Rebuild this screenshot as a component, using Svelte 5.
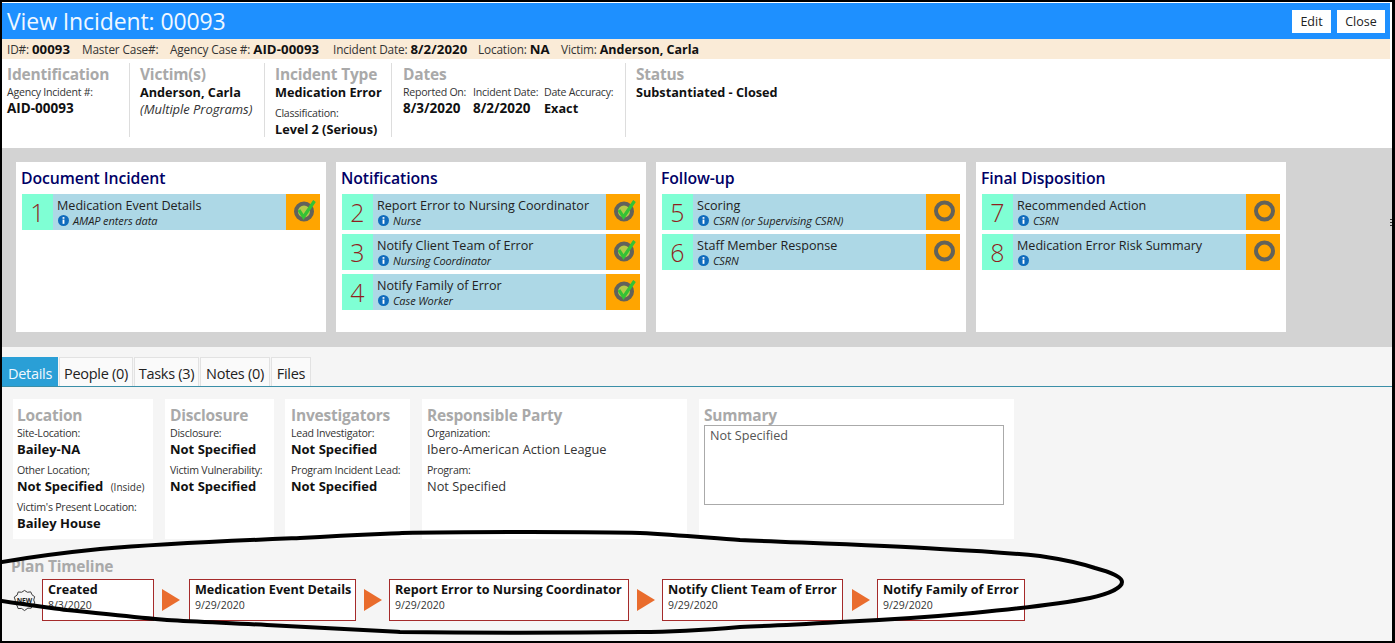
<script>
  const tasks = [
    { title: 'Document Incident', items: [{ n: 1, t: 'Medication Event Details', s: 'AMAP enters data', done: true }] },
    { title: 'Notifications', items: [
      { n: 2, t: 'Report Error to Nursing Coordinator', s: 'Nurse', done: true },
      { n: 3, t: 'Notify Client Team of Error', s: 'Nursing Coordinator', done: true },
      { n: 4, t: 'Notify Family of Error', s: 'Case Worker', done: true }] },
    { title: 'Follow-up', items: [
      { n: 5, t: 'Scoring', s: 'CSRN (or Supervising CSRN)', done: false },
      { n: 6, t: 'Staff Member Response', s: 'CSRN', done: false }] },
    { title: 'Final Disposition', items: [
      { n: 7, t: 'Recommended Action', s: 'CSRN', done: false },
      { n: 8, t: 'Medication Error Risk Summary', s: '', done: false }] }
  ];
  const tabs = ['Details', 'People (0)', 'Tasks (3)', 'Notes (0)', 'Files'];
  const timeline = [
    { t: 'Created', d: '8/3/2020', w: 112 },
    { t: 'Medication Event Details', d: '9/29/2020', w: 167 },
    { t: 'Report Error to Nursing Coordinator', d: '9/29/2020', w: 240 },
    { t: 'Notify Client Team of Error', d: '9/29/2020', w: 181 },
    { t: 'Notify Family of Error', d: '9/29/2020', w: 148 }
  ];
</script>

<div class="frame">
  <header class="top">
    <h1>View Incident: 00093</h1>
    <div class="btns"><button class="edit">Edit</button><button class="close">Close</button></div>
  </header>
  <div class="strip">
    <span class="s1">ID#: <b>00093</b></span>
    <span class="s2">Master Case#:</span>
    <span class="s3">Agency Case #: <b>AID-00093</b></span>
    <span class="s4">Incident Date: <b>8/2/2020</b></span>
    <span class="s5">Location: <b>NA</b></span>
    <span>Victim: <b class="name">Anderson, Carla</b></span>
  </div>
  <section class="summary">
    <div class="col c1">
      <h3>Identification</h3>
      <div class="lab">Agency Incident #:</div>
      <div class="val big">AID-00093</div>
    </div>
    <div class="col c2">
      <h3>Victim(s)</h3>
      <div class="val first">Anderson, Carla</div>
      <div class="em">(Multiple Programs)</div>
    </div>
    <div class="col c3">
      <h3>Incident Type</h3>
      <div class="val first">Medication Error</div>
      <div class="lab cl">Classification:</div>
      <div class="val">Level 2 (Serious)</div>
    </div>
    <div class="col c4">
      <h3>Dates</h3>
      <div class="dates">
        <div><div class="lab">Reported On:</div><div class="val big">8/3/2020</div></div>
        <div><div class="lab">Incident Date:</div><div class="val big">8/2/2020</div></div>
        <div><div class="lab">Date Accuracy:</div><div class="val">Exact</div></div>
      </div>
    </div>
    <div class="col c5">
      <h3>Status</h3>
      <div class="val first">Substantiated - Closed</div>
    </div>
  </section>

  <section class="board">
    {#each tasks as card}
      <div class="card">
        <h2>{card.title}</h2>
        {#each card.items as it}
          <div class="row">
            <div class="num">{it.n}</div>
            <div class="body">
              <div class="rt">{it.t}</div>
              <div class="rs">
                <svg class="info" viewBox="0 0 12 12" width="11" height="11">
                  <circle cx="6" cy="6" r="6" fill="#0f6cbd" />
                  <rect x="5" y="5" width="2" height="4.6" fill="#fff" />
                  <rect x="5" y="2.3" width="2" height="1.8" fill="#fff" />
                </svg>
                <i>{it.s}</i>
              </div>
            </div>
            <div class="stat">
              <svg viewBox="0 0 26 26" width="26" height="26">
                {#if it.done}
                  <circle cx="14" cy="12.500" r="8" fill="#b5c94a" stroke="#62625b" stroke-width="4" />
                  <path d="M9 11 L13.500 18 L24.500 2" fill="none" stroke="#35c235" stroke-width="3.2" />
                {:else}
                  <circle cx="14.500" cy="12" r="8.500" fill="none" stroke="#62625b" stroke-width="4" />
                {/if}
              </svg>
            </div>
          </div>
        {/each}
      </div>
    {/each}
  </section>

  <section class="lower">
    <nav class="tabs">
      {#each tabs as t, i}
        <div class="tab t{i}" class:on={i === 0}>{t}</div>
      {/each}
    </nav>
    <div class="panels">
      <div class="panel p1">
        <h3>Location</h3>
        <div class="lab">Site-Location:</div>
        <div class="val">Bailey-NA</div>
        <div class="lab gap">Other Location;</div>
        <div class="val">Not Specified <small>(Inside)</small></div>
        <div class="lab gap">Victim's Present Location:</div>
        <div class="val">Bailey House</div>
      </div>
      <div class="panel p2">
        <h3>Disclosure</h3>
        <div class="lab">Disclosure:</div>
        <div class="val">Not Specified</div>
        <div class="lab gap">Victim Vulnerability:</div>
        <div class="val">Not Specified</div>
      </div>
      <div class="panel p3">
        <h3>Investigators</h3>
        <div class="lab">Lead Investigator:</div>
        <div class="val">Not Specified</div>
        <div class="lab gap">Program Incident Lead:</div>
        <div class="val">Not Specified</div>
      </div>
      <div class="panel p4">
        <h3>Responsible Party</h3>
        <div class="lab">Organization:</div>
        <div class="plain">Ibero-American Action League</div>
        <div class="lab gap">Program:</div>
        <div class="plain">Not Specified</div>
      </div>
      <div class="panel p5">
        <h3>Summary</h3>
        <div class="ta">Not Specified</div>
      </div>
    </div>
    <h3 class="plan">Plan Timeline</h3>
    <div class="line">
      <svg class="badge" viewBox="0 0 24 24" width="23" height="23">
        <path d="M12 1.5 L15 3.4 L18.5 3 L19.8 6 L22.6 8 L21.6 11.5 L22.8 14.8 L20 16.8 L19 20 L15.5 20 L12 22.5 L9 20.3 L5.3 20.4 L4.2 17 L1.3 15 L2.4 11.8 L1.3 8.4 L4.3 6.4 L5.4 3.1 L9 3.4 Z" fill="none" stroke="#333" stroke-width="1" />
        <text x="12" y="14.5" text-anchor="middle" class="newt">NEW</text>
      </svg>
      {#each timeline as s, i}
        {#if i > 0}
          <svg class="arrow a{i}" viewBox="0 0 18 22" width="18" height="22"><path d="M0 0 L18 11 L0 22 Z" fill="#e96c2d" /></svg>
        {/if}
        <div class="step" style="width:{s.w}px">
          <div class="st">{s.t}</div>
          <div class="sd">{s.d}</div>
        </div>
      {/each}
    </div>
  </section>

  <svg class="scribble" viewBox="0 0 1395 643" width="1395" height="643">
    <path d="M-4 563 C 30 557 70 552 100 549 C 170 543 250 540 300 538 C 350 535 380 534 402 533 C 450 532 490 532 530 532 C 570 532 610 532 640 533 C 680 535 710 538 740 540 C 810 543 880 545 940 549 C 980 551 1010 553 1040 556 C 1060 559 1080 563 1095 568 C 1110 572 1122 577 1122 582 C 1122 588 1108 594 1090 598 C 1055 605 1015 609 973 613 C 930 617 885 620 840 622 C 805 624 770 626 740 627 C 705 630 670 632 640 632 C 560 633 480 633 400 632 C 355 630 310 627 267 625 C 230 623 200 622 167 620 C 130 617 100 613 67 610 C 45 607 20 604 -4 600"
      fill="none" stroke="#000" stroke-width="4" />
    <path d="M1390 219.500 H1392 M1390 222.500 H1392 M1390 225.500 H1392" fill="none" stroke="#333" stroke-width="1" />
  </svg>
</div>

<style>
  :global(body) { margin: 0; }
  .frame {
    position: relative; width: 1395px; height: 643px; box-sizing: border-box; overflow: hidden;
    border-style: solid; border-color: #000; border-width: 2px 3px 2px 2px;
    background: #fff; color: #111; font-family: "Open Sans", "Noto Sans", sans-serif;
  }
  .top {
    height: 36px; margin: 1px 2px 0 0; background: #1e90ff; display: flex; align-items: center;
    justify-content: space-between; padding: 0 5px;
  }
  h1 { margin: 0; font-size: 23px; font-weight: 400; color: #f0f8ff; letter-spacing: -0.1px; }
  .btns { display: flex; gap: 6px; }
  button {
    height: 23px; border: 0; background: #fff; color: #222; font: 400 12.5px "Open Sans", sans-serif; padding: 0;
  }
  .edit { width: 39px; }
  .close { width: 48px; }
  .strip {
    height: 20px; margin-right: 2px; background: #faebd7; display: flex; align-items: center; padding-left: 5px;
    font-size: 11.8px; letter-spacing: -0.15px; color: #333; white-space: nowrap;
  }
  .strip b { font-size: 13.2px; color: #111; letter-spacing: 0.1px; }
  .strip b.name { font-size: 12.5px; letter-spacing: 0; }
  .strip span { flex: none; }
  .s1 { width: 75px; }
  .s2 { width: 88px; }
  .s3 { width: 163px; }
  .s4 { width: 145px; }
  .s5 { width: 83px; }
  .summary { height: 89px; display: flex; padding-top: 4px; box-sizing: border-box; background: #fff; }
  .col { height: 74px; box-sizing: border-box; border-right: 1px solid #ddd; padding-left: 10px; }
  .c1 { width: 128px; padding-left: 5px; }
  .c2 { width: 135px; }
  .c3 { width: 127px; }
  .c4 { width: 234px; padding-left: 11px; }
  .c5 { border: 0; }
  h3 { margin: 0; font-size: 15.5px; line-height: 20px; font-weight: 700; color: #a9a9a9; letter-spacing: -0.2px; }
  .col h3 { margin-top: 1px; }
  .lab { font-size: 10.6px; line-height: 14px; margin-top: 1px; color: #333; letter-spacing: -0.25px; white-space: nowrap; }
  .val { font-size: 12.7px; line-height: 19px; height: 19px; font-weight: 700; color: #111; white-space: nowrap; }
  .val.big { font-size: 13.5px; }
  .val.first { line-height: 18px; height: 18px; margin-top: -1px; }
  .em { font-size: 13px; font-style: italic; line-height: 16px; color: #333; letter-spacing: -0.05px; white-space: nowrap; }
  .cl { margin-top: 5px; }
  .dates { display: grid; grid-template-columns: 70px 71px auto; }
  small { font-size: 10px; line-height: 1; font-weight: 400; margin-left: 4px; color: #333; }

  .board { height: 199px; background: #d3d3d3; display: flex; gap: 10px; padding: 14px 0 0 14px; box-sizing: border-box; }
  .card { width: 310px; height: 170px; background: #fff; padding: 6px 6px 0 5px; box-sizing: border-box; }
  h2 { margin: 0 0 5px; font-size: 15.8px; line-height: 21px; font-weight: 600; color: #000066; letter-spacing: -0.1px; }
  .row { height: 36px; display: flex; background: #add8e6; margin: 0 0 4px 1px; }
  .num { width: 31px; background: #7fffd4; color: #8f1f1f; font-size: 25px; font-weight: 300; display: flex; align-items: center; justify-content: center; }
  .body { flex: 1; padding: 4px 0 0 4px; min-width: 0; }
  .rt { font-size: 12.6px; line-height: 16px; color: #222; white-space: nowrap; }
  .rs { display: flex; align-items: center; gap: 4px; height: 15px; margin-top: -1px; }
  .rs i { font-size: 11px; letter-spacing: -0.1px; color: #222; }
  .info { flex: none; margin-left: 1px; }
  .stat { width: 34px; background: #ffa500; display: flex; align-items: center; justify-content: center; }

  .lower { height: 294px; background: #f5f5f5; padding-top: 10px; box-sizing: border-box; }
  .tabs { height: 30px; display: flex; border-bottom: 1px solid #3b8fa8; box-sizing: border-box; gap: 1px; }
  .tab { box-sizing: border-box; height: 29px; background: #fafafa; border: 1px solid #e2e2e2; border-bottom: 0; font-size: 14.5px; line-height: 31px; text-align: center; color: #222; letter-spacing: -0.3px; }
  .tab.on { background: #2a9fd6; color: #f0f8ff; border: 0; line-height: 33px; }
  .t0 { width: 56px; }
  .t1 { width: 74px; }
  .t2 { width: 65px; }
  .t3 { width: 70px; }
  .t4 { width: 40px; }
  .panels { display: flex; gap: 11px; margin: 12px 0 0 11px; height: 140px; }
  .panel { background: #fff; height: 140px; box-sizing: border-box; padding: 6px 0 0 4px; }
  .p1 { width: 140px; }
  .p2 { width: 109px; margin-left: 1px; padding-left: 5px; }
  .p3 { width: 125px; padding-left: 6px; }
  .p4 { width: 265px; margin-left: 1px; padding-left: 5px; }
  .p5 { width: 315px; margin-left: 1px; padding-left: 5px; }
  .panel .lab { margin-top: 1px; }
  .panel .lab.gap { margin-top: 3px; }
  .panel .val { font-size: 13px; line-height: 18px; height: 20px; }
  .plain { font-size: 12.8px; line-height: 18px; height: 20px; color: #333; white-space: nowrap; }
  .ta { width: 300px; height: 80px; box-sizing: border-box; background: #fff; border: 1px solid #aaa; font-size: 12.6px; padding: 1px 5px; color: #555; margin-top: 0; }
  .plan { margin: 17px 0 0 9px; }
  .line { display: flex; align-items: center; padding-left: 11px; height: 42px; margin-top: 3px; }
  .badge { margin: 0 6px 0 0; flex: none; }
  .newt { font: 700 7px "Open Sans", sans-serif; fill: #222; }
  .step { box-sizing: border-box; height: 42px; background: #fff; border: 1px solid #a52a2a; padding: 1px 0 0 5px; flex: none; }
  .st { font-size: 12.6px; line-height: 17px; font-weight: 700; white-space: nowrap; color: #111; }
  .sd { font-size: 10.5px; line-height: 14px; color: #333; }
  .arrow { margin: 0 7px 0 8px; flex: none; }
  .a1 { margin-right: 9px; }
  .a4 { margin-left: 9px; }
  .scribble { position: absolute; left: -2px; top: -2px; pointer-events: none; }
</style>
